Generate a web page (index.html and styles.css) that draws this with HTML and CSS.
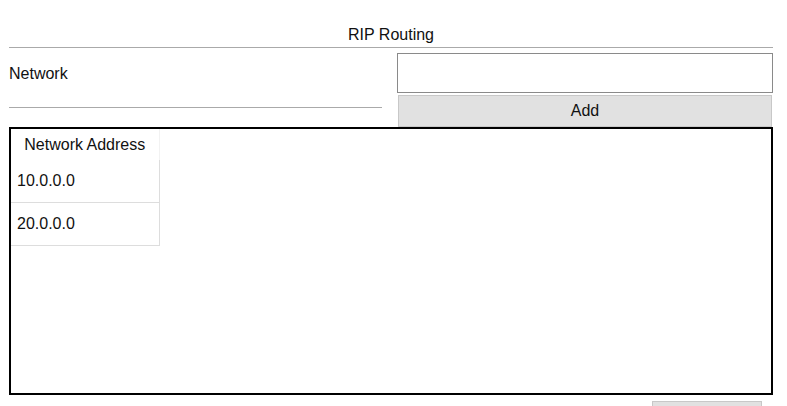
FILE: index.html
```html
<!DOCTYPE html>
<html>
<head>
<meta charset="utf-8">
<link rel="stylesheet" href="styles.css">
</head>
<body>
<div class="page">
  <div class="title">RIP Routing</div>
  <div class="form-row">
    <div class="left-col">
      <label class="label">Network</label>
      <div class="underline"></div>
    </div>
    <div class="right-col">
      <input class="net-input" type="text">
      <button class="add-btn">Add</button>
    </div>
  </div>
  <div class="table-box">
    <table class="net-table">
      <thead>
        <tr><th>Network Address</th></tr>
      </thead>
      <tbody>
        <tr><td>10.0.0.0</td></tr>
        <tr><td>20.0.0.0</td></tr>
      </tbody>
    </table>
  </div>
  <div class="bottom-row">
    <button class="bottom-btn"></button>
  </div>
</div>
</body>
</html>
```
FILE: styles.css
```css
html, body {
  margin: 0;
  padding: 0;
  background: #fff;
  overflow: hidden;
}
body {
  font-family: "Liberation Sans", Arial, sans-serif;
  font-size: 16px;
  color: #111;
}
.page {
  width: 764px;
  margin-left: 9px;
}
.title {
  padding-top: 25px;
  padding-bottom: 2px;
  line-height: 20px;
  text-align: center;
  border-bottom: 1px solid #aaa;
}
.form-row {
  display: flex;
  gap: 15px;
}
.left-col {
  width: 373px;
  display: flex;
  flex-direction: column;
}
.label {
  margin-top: 16px;
  line-height: 20px;
  display: block;
}
.underline {
  margin-top: 23px;
  height: 1px;
  background: #aaa;
}
.right-col {
  flex: 1;
  display: flex;
  flex-direction: column;
  align-items: stretch;
}
.net-input {
  margin: 5px 0 0 0;
  box-sizing: border-box;
  height: 40px;
  border: 1px solid #8a8a8a;
  padding: 0 6px;
  font: inherit;
  outline: none;
}
.add-btn {
  margin: 2px 1px 0 1px;
  box-sizing: border-box;
  height: 32px;
  background: #e1e1e1;
  border: 1px solid #c8c8c8;
  font: inherit;
  color: #111;
  padding: 0;
}
.table-box {
  margin-top: 0;
  box-sizing: border-box;
  height: 268px;
  border: 2px solid #000;
}
.net-table {
  border-collapse: collapse;
}
.net-table th {
  width: 148px;
  box-sizing: border-box;
  height: 31px;
  font-weight: normal;
  text-align: center;
  padding: 0;
  border-right: 1px solid #f2f2f2;
}
.net-table td {
  height: 42px;
  padding: 0 0 0 6px;
  text-align: left;
  border-bottom: 1px solid #ddd;
  border-right: 1px solid #ddd;
}
.net-table tbody tr:last-child td {
  height: 42px;
}
.bottom-row {
  display: flex;
  justify-content: flex-end;
  padding-right: 11px;
  margin-top: 6px;
}
.bottom-btn {
  width: 110px;
  height: 30px;
  background: #e1e1e1;
  border: 1px solid #c8c8c8;
  padding: 0;
}
```
